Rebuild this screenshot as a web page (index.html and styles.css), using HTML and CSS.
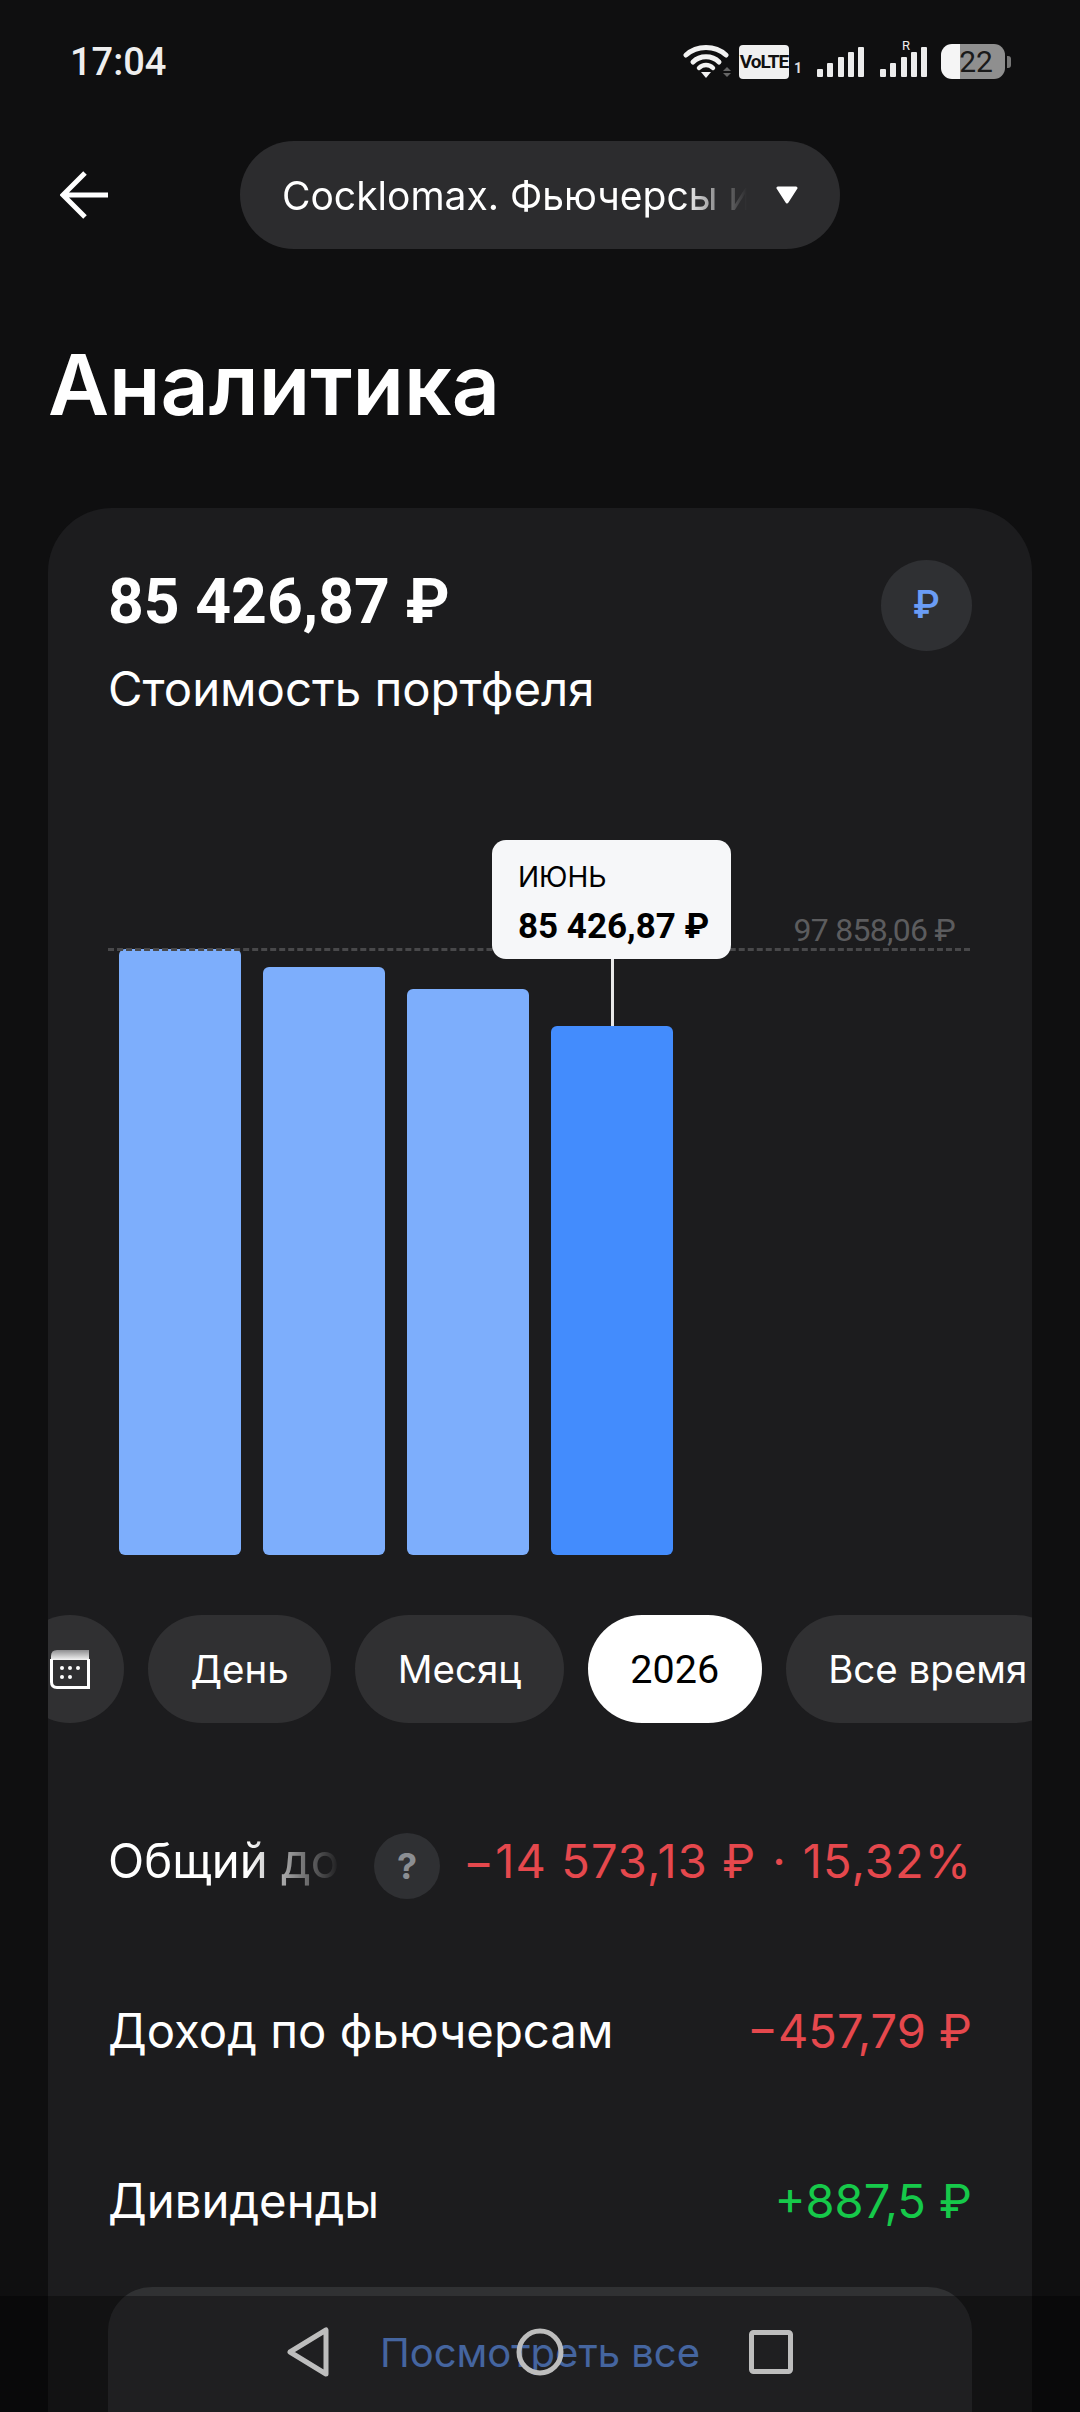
FILE: index.html
```html
<!DOCTYPE html>
<html lang="en">
  <head>
    <meta charset="utf-8" />
    <title>Аналитика</title>
    <link rel="stylesheet" href="styles.css">
  </head>
  <body>
    <div class="status">
      <span class="time">17:04</span>
      <div class="status-icons">
        <svg class="wifi" width="50" height="36" viewBox="0 0 50 36">
          <path d="M3 11 C14 1 32 1 43 11" fill="none" stroke="#f2f2f2" stroke-width="5" stroke-linecap="round"/>
          <path d="M10 18 C17 11 29 11 36 18" fill="none" stroke="#f2f2f2" stroke-width="5" stroke-linecap="round"/>
          <path d="M16 24 C20 20 26 20 30 24" fill="none" stroke="#f2f2f2" stroke-width="4.5" stroke-linecap="round"/>
          <path d="M18 28 H28 L23 34 Z" fill="#f2f2f2"/>
          <path d="M44 23 L48 27 H40 Z M40 29 H48 L44 33 Z" fill="#666"/>
        </svg>
        <span class="volte">VoLTE</span>
        <span class="sim">1</span>
        <svg class="signal" width="48" height="30" viewBox="0 0 48 30">
          <rect x="0" y="22" width="6" height="8" rx="1"/>
          <rect x="10" y="16" width="6" height="14" rx="1"/>
          <rect x="21" y="10" width="6" height="20" rx="1"/>
          <rect x="31" y="5" width="6" height="25" rx="1"/>
          <rect x="41" y="0" width="6" height="30" rx="1"/>
        </svg>
        <div class="signal-roam">
          <svg class="signal" width="48" height="30" viewBox="0 0 48 30">
            <rect x="0" y="22" width="6" height="8" rx="1"/>
            <rect x="10" y="16" width="6" height="14" rx="1"/>
            <rect x="21" y="10" width="6" height="20" rx="1"/>
            <rect x="31" y="5" width="6" height="25" rx="1"/>
            <rect x="41" y="0" width="6" height="30" rx="1"/>
          </svg>
          <span class="roam">R</span>
        </div>
        <div class="battery"><span>22</span></div>
        <div class="battery-nub"></div>
      </div>
    </div>

    <div class="topbar">
      <svg class="back" width="48" height="48" viewBox="0 0 48 48">
        <path d="M48 24 H4 M25 2 L3 24 L25 46" fill="none" stroke="#fff" stroke-width="5"/>
      </svg>
      <div class="account">
        <span class="account-name">Cocklomax. Фьючерсы и</span>
        <svg width="24" height="18" viewBox="0 0 24 18">
          <path d="M3 2 H21 L12 16 Z" fill="#fff" stroke="#fff" stroke-width="3" stroke-linejoin="round"/>
        </svg>
      </div>
    </div>

    <h1 class="title">Аналитика</h1>

    <div class="card">
      <div class="card-head">
        <div>
          <div class="amount">85 426,87 ₽</div>
          <div class="amount-label">Стоимость портфеля</div>
        </div>
        <div class="currency">₽</div>
      </div>

      <div class="chart">
        <div class="bars">
          <div class="bar" style="height: 606px"></div>
          <div class="bar" style="height: 588px"></div>
          <div class="bar" style="height: 566px"></div>
          <div class="bar active" style="height: 529px"></div>
        </div>
        <div class="max-line"></div>
        <div class="max-value">97 858,06 ₽</div>
        <div class="stem"></div>
        <div class="tooltip">
          <div class="tooltip-month">ИЮНЬ</div>
          <div class="tooltip-value">85 426,87 ₽</div>
        </div>
      </div>

      <div class="chips">
        <div class="chip chip-icon">
          <svg width="40" height="40" viewBox="0 0 40 40">
            <defs>
              <linearGradient id="calTop" x1="0" y1="0" x2="0" y2="1">
                <stop offset="0" stop-color="#8e8e90"/>
                <stop offset="1" stop-color="#f4f4f4"/>
              </linearGradient>
            </defs>
            <path d="M7 1 H39 V11 H1 V7 Q1 1 7 1 Z" fill="url(#calTop)"/>
            <path d="M1.5 10 V33 Q1.5 38.5 7 38.5 H38.5 V10" fill="none" stroke="#fff" stroke-width="3"/>
            <g fill="#fff">
              <circle cx="12" cy="19" r="2"/>
              <circle cx="20" cy="19" r="2"/>
              <circle cx="28" cy="19" r="2"/>
              <circle cx="12" cy="28" r="2"/>
              <circle cx="20" cy="28" r="2"/>
            </g>
          </svg>
        </div>
        <div class="chip">День</div>
        <div class="chip">Месяц</div>
        <div class="chip selected">2026</div>
        <div class="chip">Все время</div>
      </div>

      <div class="row">
        <span class="row-label faded">Общий до</span>
        <span class="help">?</span>
        <span class="row-value total loss">−14 573,13 ₽<span class="dot">·</span>15,32%</span>
      </div>
      <div class="row">
        <span class="row-label">Доход по фьючерсам</span>
        <span class="row-value loss">−457,79 ₽</span>
      </div>
      <div class="row">
        <span class="row-label">Дивиденды</span>
        <span class="row-value gain">+887,5 ₽</span>
      </div>

      <div class="see-all">Посмотреть все</div>
    </div>

    <div class="navbar">
      <svg width="44" height="50" viewBox="0 0 44 50">
        <path d="M39 3 V47 L3 25 Z" fill="none" stroke="#bdbdbd" stroke-width="5" stroke-linejoin="round"/>
      </svg>
      <svg width="48" height="48" viewBox="0 0 48 48">
        <circle cx="24" cy="24" r="21" fill="none" stroke="#bdbdbd" stroke-width="5"/>
      </svg>
      <svg width="44" height="44" viewBox="0 0 44 44">
        <rect x="2.5" y="2.5" width="39" height="39" rx="2" fill="none" stroke="#bdbdbd" stroke-width="5"/>
      </svg>
    </div>
  </body>
</html>
```
FILE: styles.css
```css
* {
  margin: 0;
  box-sizing: border-box;
}
html,
body {
  height: 2412px;
  overflow: hidden;
}
body {
  position: relative;
  background-color: #0f0f10;
  color: #fff;
  font-family: Inter, "Noto Sans", sans-serif;
}

/* status bar */
.status {
  height: 120px;
  padding: 3px 70px 0;
  display: flex;
  justify-content: space-between;
  align-items: center;
}
.time {
  font-family: Roboto, sans-serif;
  font-size: 38px;
  font-weight: 500;
  color: #eee;
}
.status-icons {
  display: flex;
  align-items: center;
  margin-right: -1px;
}
.wifi {
  margin-right: 6px;
}
.volte {
  width: 50px;
  height: 34px;
  background-color: #f0f0f0;
  border-radius: 4px;
  color: #111;
  font-family: Roboto, sans-serif;
  font-size: 19px;
  font-weight: 700;
  line-height: 34px;
  text-align: center;
  letter-spacing: -1px;
}
.sim {
  width: 28px;
  padding: 12px 0 0 5px;
  font-family: Roboto, sans-serif;
  font-size: 14px;
  font-weight: 700;
  color: #ddd;
}
.signal {
  display: block;
  fill: #ececec;
}
.signal-roam {
  position: relative;
  margin-left: 15px;
  margin-right: 13px;
}
.roam {
  position: absolute;
  left: 22px;
  top: -9px;
  font-family: Roboto, sans-serif;
  font-size: 13px;
  color: #eee;
}
.battery {
  width: 64px;
  height: 35px;
  border-radius: 11px;
  background: linear-gradient(90deg, #f5f5f5 30%, #8f8f8f 30%);
  color: #1a1a1a;
  font-family: Roboto, sans-serif;
  font-size: 30px;
  line-height: 35px;
  text-align: center;
  padding-left: 6px;
}
.battery-nub {
  width: 4px;
  height: 12px;
  margin-left: 2px;
  background-color: #777;
  border-radius: 0 3px 3px 0;
}

/* header */
.topbar {
  margin-top: 21px;
  height: 108px;
  padding-left: 60px;
  display: flex;
  align-items: center;
}
.back {
  margin-right: 132px;
}
.account {
  width: 600px;
  height: 108px;
  padding-left: 42px;
  background-color: #2c2c2e;
  border-radius: 54px;
  display: flex;
  align-items: center;
}
.account-name {
  width: 465px;
  margin-right: 28px;
  white-space: nowrap;
  font-size: 39px;
  -webkit-mask-image: linear-gradient(90deg, #000 86%, transparent 100%);
  mask-image: linear-gradient(90deg, #000 86%, transparent 100%);
}
.title {
  margin: 86px 0 73px 48px;
  font-size: 84px;
  line-height: 100px;
  font-weight: 600;
}

/* card */
.card {
  margin: 0 48px;
  height: 1904px;
  background-color: #1c1c1e;
  border-radius: 64px 64px 0 0;
  overflow: hidden;
}
.card-head {
  padding: 54px 60px 0;
  display: flex;
  justify-content: space-between;
  align-items: flex-start;
}
.amount {
  font-family: Roboto, sans-serif;
  font-size: 62.5px;
  line-height: 80px;
  font-weight: 700;
}
.amount-label {
  margin-top: 17px;
  font-size: 47.3px;
  line-height: 60px;
}
.currency {
  width: 91px;
  height: 91px;
  margin-top: -2px;
  border-radius: 50%;
  background-color: #2f3033;
  color: #6a9cf5;
  font-family: Roboto, sans-serif;
  font-size: 38px;
  font-weight: 500;
  line-height: 91px;
  text-align: center;
}

/* chart */
.chart {
  position: relative;
  height: 715px;
  margin: 121px 62px 0 60px;
  display: flex;
  align-items: flex-end;
}
.bars {
  padding-left: 11px;
  display: flex;
  align-items: flex-end;
  gap: 22px;
}
.bar {
  width: 122px;
  background-color: #7daefc;
  border-radius: 6px;
}
.bar.active {
  background-color: #438cfd;
}
.max-line {
  position: absolute;
  left: 0;
  right: 0;
  top: 108px;
  border-top: 3px dashed #48484a;
}
.max-value {
  position: absolute;
  right: 15px;
  top: 71px;
  color: #5c5c5e;
  font-family: Roboto, sans-serif;
  font-size: 32px;
  letter-spacing: -0.7px;
}
.stem {
  position: absolute;
  left: 503px;
  top: 119px;
  width: 3px;
  height: 67px;
  background-color: #e8e8e8;
}
.tooltip {
  position: absolute;
  left: 384px;
  top: 0;
  width: 239px;
  height: 119px;
  padding: 19px 26px;
  background-color: #f6f7f9;
  border-radius: 14px;
  color: #000;
}
.tooltip-month {
  font-size: 28px;
  line-height: 36px;
}
.tooltip-value {
  margin-top: 12px;
  font-family: Roboto, sans-serif;
  font-size: 35px;
  line-height: 40px;
  font-weight: 700;
  white-space: nowrap;
}

/* period chips */
.chips {
  margin-top: 60px;
  margin-left: -32px;
  display: flex;
  gap: 24px;
}
.chip {
  flex-shrink: 0;
  height: 108px;
  padding: 0 42.5px;
  background-color: #303032;
  border-radius: 54px;
  font-size: 38.5px;
  white-space: nowrap;
  display: flex;
  align-items: center;
}
.chip-icon {
  width: 108px;
  padding: 0;
  justify-content: center;
}
.chip.selected {
  background-color: #fff;
  color: #000;
  font-family: Roboto, sans-serif;
  font-size: 39.5px;
}

/* rows */
.chips + .row {
  margin-top: 54px;
}
.row {
  height: 170px;
  padding: 0 60px 3px;
  display: flex;
  align-items: center;
}
.row-label {
  font-size: 47.3px;
  white-space: nowrap;
}
.row-label.faded {
  width: 232px;
  -webkit-mask-image: linear-gradient(90deg, #000 60%, transparent 100%);
  mask-image: linear-gradient(90deg, #000 60%, transparent 100%);
}
.help {
  width: 66px;
  height: 66px;
  margin: 11px 0 0 34px;
  border-radius: 50%;
  background-color: #2f3033;
  color: #8b8e93;
  font-size: 36px;
  font-weight: 700;
  line-height: 66px;
  text-align: center;
}
.row-value {
  margin-left: auto;
  font-size: 47px;
  white-space: nowrap;
}
.row-value.total {
  letter-spacing: 1.1px;
}
.dot {
  margin: 0 16px;
}
.loss {
  color: #e5484d;
}
.gain {
  color: #16c94a;
}
.see-all {
  margin: 0 60px;
  height: 200px;
  padding-top: 41px;
  background-color: #303133;
  border-radius: 44px;
  color: #6a9bf5;
  font-size: 40px;
  text-align: center;
}

/* system navigation over the page */
.navbar {
  position: absolute;
  left: 0;
  right: 0;
  bottom: 0;
  height: 116px;
  background-color: rgba(0, 0, 0, 0.35);
  display: flex;
  justify-content: center;
  align-items: center;
  gap: 185px;
  padding: 0 0 4px 0;
}
```
